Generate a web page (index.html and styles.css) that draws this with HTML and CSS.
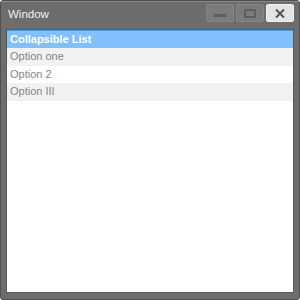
FILE: index.html
```html
<!DOCTYPE html>
<html>
<head>
<meta charset="utf-8">
<link rel="stylesheet" href="styles.css">
</head>
<body>
<div class="window">
  <div class="titlebar">
    <span class="title">Window</span>
    <div class="buttons">
      <div class="btn"><span class="min"></span></div>
      <div class="btn"><span class="max"></span></div>
      <div class="btn close">
        <svg width="10" height="9" viewBox="0 0 10 9"><path d="M1 0.5 L9 8.5 M9 0.5 L1 8.5" stroke="#505050" stroke-width="2"/></svg>
      </div>
    </div>
  </div>
  <div class="content">
    <div class="list-header">Collapsible List</div>
    <div class="row odd">Option one</div>
    <div class="row">Option 2</div>
    <div class="row odd">Option III</div>
  </div>
</div>
</body>
</html>
```
FILE: styles.css
```css
html, body {
  margin: 0;
  padding: 0;
  background: #ffffff;
}
body {
  font-family: "Liberation Sans", Arial, sans-serif;
}
.window {
  width: 300px;
  height: 300px;
  box-sizing: border-box;
  background: #6d6d6d;
  border: 1px solid #4f4f4f;
  border-radius: 3px;
  display: flex;
  flex-direction: column;
  padding: 0 5px 6px 5px;
}
.titlebar {
  height: 27px;
  display: flex;
  align-items: flex-start;
  justify-content: space-between;
  border-top: 1px solid #888;
  margin: 0 -5px;
  padding: 0 5px 0 7px;
}
.title {
  color: #f0f0f0;
  font-size: 11.5px;
  line-height: 12px;
  margin-top: 6px;
}
.buttons {
  display: flex;
  gap: 2px;
  margin-top: 2px;
}
.btn {
  width: 28px;
  height: 18px;
  box-sizing: border-box;
  background: #7b7b7b;
  border: 1px solid #868686;
  border-radius: 2px;
  display: flex;
  align-items: center;
  justify-content: center;
}
.btn.close {
  background: #e4e4e4;
  border-color: #f0f0f0;
}
.min {
  width: 12px;
  height: 3px;
  background: #5e5e5e;
  margin-top: 4px;
}
.max {
  width: 8px;
  height: 5px;
  border: 2px solid #5e5e5e;
}
.content {
  flex: 1;
  background: #ffffff;
  border: 1px solid #5a5a5a;
}
.list-header {
  height: 18px;
  box-sizing: border-box;
  background: #80c0ff;
  border-top: 1px solid #4d9ee8;
  color: #ffffff;
  font-weight: bold;
  font-size: 11px;
  line-height: 16px;
  padding-left: 3px;
}
.row {
  height: 17.5px;
  font-size: 11px;
  line-height: 17px;
  color: #858585;
  padding-left: 3px;
}
.row.odd {
  background: #f2f2f2;
}
```
